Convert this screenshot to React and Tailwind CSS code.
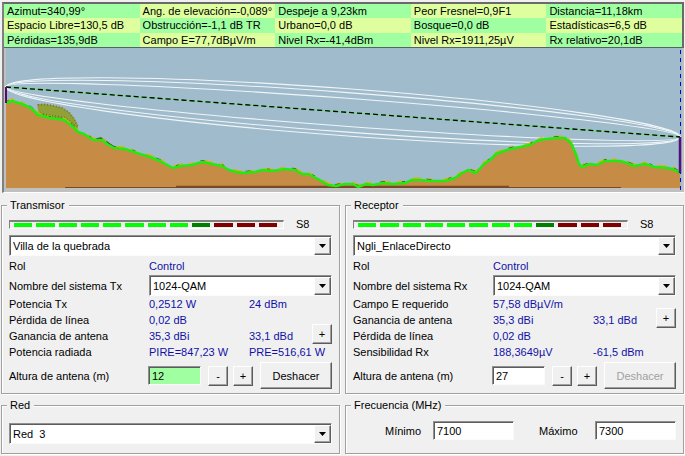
import React, { useState } from "react";

const SUNKEN =
  "border border-t-[#909090] border-l-[#909090] border-b-[#fbfbfb] border-r-[#fbfbfb] shadow-[inset_1px_1px_0_#5c5c5c]";
const RAISED =
  "border border-t-white border-l-white border-b-[#5c5c5c] border-r-[#5c5c5c] shadow-[inset_-1px_-1px_0_#a0a0a0]";

const readings = [
  ["Azimut=340,99°", "Ang. de elevación=-0,089°", "Despeje a 9,23km", "Peor Fresnel=0,9F1", "Distancia=11,18km"],
  ["Espacio Libre=130,5 dB", "Obstrucción=-1,1 dB TR", "Urbano=0,0 dB", "Bosque=0,0 dB", "Estadísticas=6,5 dB"],
  ["Pérdidas=135,9dB", "Campo E=77,7dBµV/m", "Nivel Rx=-41,4dBm", "Nivel Rx=1911,25µV", "Rx relativo=20,1dB"],
];

const terrain =
  "6,103 12,101 22,104 31,108 38,115 50,118 64,120 72,126 78,132 84,134 93,140 102,140 107,144 114,148 125,149 140,154 150,157 160,161 173,168 180,166 192,165 202,162 212,164 222,166 229,170 236,172 243,173 255,172 262,170 272,171 285,169 295,170 302,174 308,174 318,179 328,185 336,186 345,184 353,184 358,187 366,184 373,185 383,183 392,184 405,183 412,180 420,180 430,181 445,181 455,178 462,173 468,170 476,173 484,164 490,160 496,154 507,150 520,147 530,145 537,141 545,139 558,138 565,138 571,143 575,152 579,164 582,167 590,164 597,165 605,161 620,161 627,163 634,166 645,164 655,167 668,168 675,170 680,173";

function Readings() {
  return (
    <div className="border-b border-[#5a6068] border-r-2 border-r-[#6a6a6a]">
      {readings.map((row, r) => (
        <div key={r} className={`grid grid-cols-5 ${r === 1 ? "h-[15px]" : "h-[14px]"}`}>
          {row.map((text, c) => (
            <div
              key={text}
              className={`whitespace-nowrap pl-[3px] leading-[14px] ${(r + c) % 2 ? "bg-[#dfff9f]" : "bg-[#a0ffa0]"}`}
            >
              {text}
            </div>
          ))}
        </div>
      ))}
    </div>
  );
}

function Profile() {
  return (
    <svg
      className="block h-[144px] w-full"
      viewBox="4 48 680 144"
      preserveAspectRatio="none"
      role="img"
      aria-label="Perfil del terreno"
    >
      <rect x="4" y="48" width="680" height="144" fill="#c0c0c0" />
      <rect x="6" y="48" width="676" height="140" fill="#a0bbcb" />
      <g fill="none" stroke="#f0f5f8" strokeWidth="1.1" transform="rotate(4.243 343 112)">
        <ellipse cx="343" cy="112" rx="338" ry="23.5" />
        <ellipse cx="343" cy="112" rx="338" ry="19.7" />
        <ellipse cx="343" cy="112" rx="338" ry="14" />
      </g>
      <path d="M37 104L45 104L54 105.500L62 107.500L69 112L74 118L78 125L78 132L72 127L64 120L50 118L39 116Z" fill="#92a038" />
      <path d="M38 105L45 104.500L54 106L62 108L69 112.500L74 118.500L77.500 126" fill="none" stroke="#7a7c38" strokeWidth="2" strokeDasharray="1 2" />
      <path d="M40 114L50 116L64 118L71 123L77 129" fill="none" stroke="#6d7a20" strokeWidth="3" strokeDasharray="1 2" />
      <polygon points={`6,188 ${terrain} 680,188`} fill="#c68c46" />
      <path d="M65 187.500H621" stroke="#7a4a26" strokeWidth="1" />
      <path d="M176 186.500H509" stroke="#7a4a26" strokeWidth="1.500" />
      <path d="M96 139L101 138L107 142L114 147" fill="none" stroke="#4a4a20" strokeWidth="1.500" />
      <polyline points={terrain} transform="translate(0 -1.5)" fill="none" stroke="#d8b020" strokeWidth="2" strokeDasharray="9 6 5 11" />
      <polyline points={terrain} transform="translate(0 -1.5)" fill="none" stroke="#3c6030" strokeWidth="1" strokeDasharray="3 22 5 17" />
      <polyline points={terrain} fill="none" stroke="#22ea10" strokeWidth="2.5" strokeLinejoin="round" />
      <path d="M6 87L680 137" stroke="#6be080" strokeWidth="1.300" />
      <path d="M6 87L680 137" stroke="#000" strokeWidth="1.300" strokeDasharray="5 3" />
      <path d="M6 87V103" stroke="#5a0a6e" strokeWidth="2" />
      <path d="M680.500 50V192" stroke="#0808b8" strokeWidth="1" strokeDasharray="4 4" />
      <path d="M680 137V173" stroke="#50107c" strokeWidth="2.500" />
    </svg>
  );
}

function Group({ title, className = "", children }) {
  return (
    <fieldset
      className={`min-w-0 border border-[#a0a0a0] px-[7px] shadow-[1px_1px_0_#fff,inset_1px_1px_0_#fff] ${className}`}
    >
      <legend className="-ml-[2px] h-4 bg-[#f0f0f0] pl-[3px] pr-[4px] leading-4">{title}</legend>
      {children}
    </fieldset>
  );
}

function Combo({ id, label, options, className = "" }) {
  return (
    <div className={`relative h-[21px] ${className}`}>
      <select
        id={id}
        aria-label={label}
        className={`block h-full w-full appearance-none bg-white pl-[3px] pr-5 text-black outline-none ${SUNKEN}`}
      >
        {options.map((o) => (
          <option key={o}>{o}</option>
        ))}
      </select>
      <span
        className={`pointer-events-none absolute right-[1px] top-[2px] bottom-[1px] flex w-[17px] items-center justify-center bg-[#f0f0f0] ${RAISED}`}
      >
        <svg width="7" height="4" viewBox="0 0 7 4" aria-hidden="true">
          <path d="M0 0H7L3.500 4Z" fill="#000" />
        </svg>
      </span>
    </div>
  );
}

function SmallButton({ children, label, onClick, className = "" }) {
  return (
    <button
      type="button"
      aria-label={label}
      onClick={onClick}
      className={`h-5 w-5 shrink-0 bg-[#f0f0f0] leading-4 ${RAISED} ${className}`}
    >
      {children}
    </button>
  );
}

function Meter() {
  return (
    <div className="flex h-4 items-center gap-3">
      <div
        role="meter"
        aria-label="Señal"
        aria-valuemin={0}
        aria-valuemax={12}
        aria-valuenow={8}
        className="flex h-[9px] flex-1 items-center gap-1 border border-t-2 border-t-[#808080] border-l-[#808080] border-b-white border-r-white pl-1 pr-[6px]"
      >
        {Array.from({ length: 12 }, (_, i) => (
          <span
            key={i}
            className={`h-1 flex-1 ${i < 8 ? "bg-[#00ff00]" : i === 8 ? "bg-[#008000]" : "bg-[#800000]"}`}
          />
        ))}
      </div>
      <span className="w-9">S8</span>
    </div>
  );
}

function Station({ prefix, title, site, systemLabel, rows, plusClass, height, edited }) {
  const [value, setValue] = useState(height);
  const step = (d) => setValue((v) => String(Number(v) + d));
  return (
    <Group title={title} className="pb-[4px]">
      <div className="pt-[3px]">
        <Meter />
      </div>
      <Combo label={title} options={[site]} className="mt-[3px]" />
      <div className="grid h-[19px] grid-cols-[140px_1fr] items-center">
        <span>Rol</span>
        <span className="text-[#1010a8]">Control</span>
      </div>
      <div className="grid grid-cols-[140px_1fr] items-center">
        <label htmlFor={`${prefix}-system`}>{systemLabel}</label>
        <Combo id={`${prefix}-system`} options={["1024-QAM"]} />
      </div>
      <div className="grid auto-rows-[16px] grid-cols-[140px_100px_1fr_20px] whitespace-nowrap leading-4">
        {rows.map(([name, a, b], i) => (
          <React.Fragment key={name}>
            <span className="col-start-1">{name}</span>
            <span className="col-start-2 text-[#1010a8]">{a}</span>
            <span className={`col-start-3 text-[#1010a8] ${i === 3 ? "col-span-2" : ""}`}>{b}</span>
          </React.Fragment>
        ))}
        <SmallButton label="Editar ganancia" className={`col-start-4 self-end ${plusClass}`}>
          +
        </SmallButton>
      </div>
      <div className="mt-[2px] flex h-[27px] items-center">
        <label htmlFor={`${prefix}-height`} className="w-[139px] shrink-0">
          Altura de antena (m)
        </label>
        <input
          id={`${prefix}-height`}
          value={value}
          onChange={(e) => setValue(e.target.value)}
          className={`h-[19px] w-[53px] pl-[3px] outline-none ${SUNKEN} ${edited ? "bg-[#a0ffa0]" : "bg-white"}`}
        />
        <SmallButton label="Bajar" onClick={() => step(-1)} className="ml-[7px]">
          -
        </SmallButton>
        <SmallButton label="Subir" onClick={() => step(1)} className="ml-[5px]">
          +
        </SmallButton>
        <button
          type="button"
          disabled={!edited}
          onClick={() => setValue(height)}
          className={`ml-[7px] h-[27px] flex-1 bg-[#f0f0f0] disabled:text-[#a0a0a0] ${RAISED}`}
        >
          Deshacer
        </button>
      </div>
    </Group>
  );
}

function FrequencyField({ id, label, value, labelClass }) {
  return (
    <div className="flex items-center">
      <label htmlFor={id} className={labelClass}>
        {label}
      </label>
      <input
        id={id}
        defaultValue={value}
        className={`h-[19px] w-[81px] bg-white pl-[3px] outline-none ${SUNKEN}`}
      />
    </div>
  );
}

export default function App() {
  return (
    <main className="min-h-screen bg-[#f0f0f0] font-['Liberation_Sans',Arial,sans-serif] text-[11px] leading-4 text-black">
      <div className="pt-[2px]">
        <section className="ml-[2px] mr-px border-b border-l-2 border-t-2 border-b-white border-l-[#808080] border-t-[#6a6a6a]">
          <Readings />
          <Profile />
        </section>
      </div>
      <div className="grid grid-cols-2 gap-x-[5px] gap-y-[3px] px-px pt-[4px]">
        <Station
          prefix="tx"
          title="Transmisor"
          site="Villa de la quebrada"
          systemLabel="Nombre del sistema Tx"
          rows={[
            ["Potencia Tx", "0,2512 W", "24 dBm"],
            ["Pérdida de línea", "0,02 dB", ""],
            ["Ganancia de antena", "35,3 dBi", "33,1 dBd"],
            ["Potencia radiada", "PIRE=847,23 W", "PRE=516,61 W"],
          ]}
          plusClass="row-start-2 row-span-2"
          height="12"
          edited
        />
        <Station
          prefix="rx"
          title="Receptor"
          site="Ngli_EnlaceDirecto"
          systemLabel="Nombre del sistema Rx"
          rows={[
            ["Campo E requerido", "57,58 dBµV/m", ""],
            ["Ganancia de antena", "35,3 dBi", "33,1 dBd"],
            ["Pérdida de línea", "0,02 dB", ""],
            ["Sensibilidad Rx", "188,3649µV", "-61,5 dBm"],
          ]}
          plusClass="row-start-1 row-span-2"
          height="27"
        />
        <Group title="Red" className="pb-[9px] pt-[10px]">
          <Combo label="Red" options={["Red\u00a0\u00a03"]} />
        </Group>
        <Group title="Frecuencia (MHz)" className="pb-[9px] pt-[8px]">
          <div className="flex justify-end gap-[25px]">
            <FrequencyField id="fmin" label="Mínimo" value="7100" labelClass="w-12" />
            <FrequencyField id="fmax" label="Máximo" value="7300" labelClass="w-14" />
          </div>
        </Group>
      </div>
    </main>
  );
}
